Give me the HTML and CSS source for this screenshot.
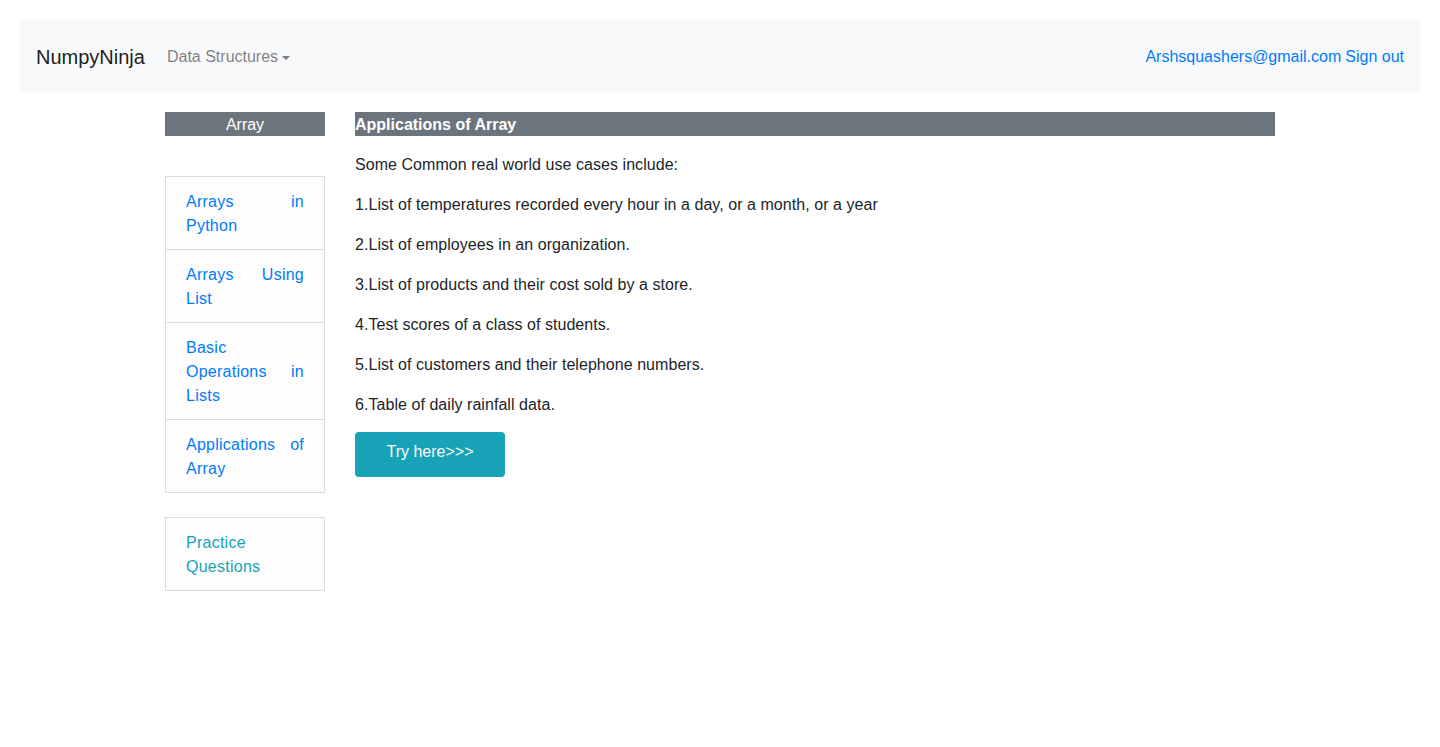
FILE: index.html
```html
<!DOCTYPE html>
<html lang="en">
<head>
<meta charset="utf-8">
<title>Applications of Array</title>
<link rel="stylesheet" href="styles.css">
</head>
<body>
<nav class="navbar">
  <div class="nav-left">
    <a class="brand" href="#">NumpyNinja</a>
    <a class="dropdown" href="#">Data Structures<span class="caret"></span></a>
  </div>
  <div class="nav-right">
    <a class="nav-link" href="#">Arshsquashers@gmail.com</a>
    <a class="nav-link" href="#">Sign out</a>
  </div>
</nav>
<div class="container">
  <aside class="sidebar">
    <div class="side-title">Array</div>
    <ul class="list-group">
      <li class="list-item"><a href="#">Arrays in Python</a></li>
      <li class="list-item"><a href="#">Arrays Using List</a></li>
      <li class="list-item"><a href="#">Basic Operations in Lists</a></li>
      <li class="list-item"><a href="#">Applications of Array</a></li>
    </ul>
    <ul class="list-group practice">
      <li class="list-item"><a class="info" href="#">Practice Questions</a></li>
    </ul>
  </aside>
  <main class="main">
    <h2 class="main-title">Applications of Array</h2>
    <p>Some Common real world use cases include:</p>
    <p>1.List of temperatures recorded every hour in a day, or a month, or a year</p>
    <p>2.List of employees in an organization.</p>
    <p>3.List of products and their cost sold by a store.</p>
    <p>4.Test scores of a class of students.</p>
    <p>5.List of customers and their telephone numbers.</p>
    <p>6.Table of daily rainfall data.</p>
    <a class="btn" href="#">Try here&gt;&gt;&gt;</a>
  </main>
</div>
</body>
</html>
```
FILE: styles.css
```css
* { box-sizing: border-box; }
html, body { margin: 0; padding: 0; }
body {
  padding: 20px;
  font-family: "Liberation Sans", Arial, sans-serif;
  font-size: 16px;
  line-height: 24px;
  color: #212529;
  background: #fff;
}
a { text-decoration: none; }
.navbar {
  display: flex;
  justify-content: space-between;
  align-items: center;
  height: 72px;
  padding: 2px 16px 0;
  background: #f8f9fa;
}
.nav-left { display: flex; align-items: center; }
.brand {
  font-size: 20px;
  line-height: 30px;
  color: rgba(0,0,0,.9);
  margin-right: 22px;
}
.dropdown { color: rgba(0,0,0,.5); display: flex; align-items: center; }
.caret {
  display: inline-block;
  margin-left: 4px;
  width: 0; height: 0;
  border-left: 4px solid transparent;
  border-right: 4px solid transparent;
  border-top: 4px solid rgba(0,0,0,.5);
  margin-top: 1px;
}
.nav-right { display: flex; gap: 4px; }
.nav-link { color: #007bff; }
.container {
  width: 1140px;
  margin: 20px auto 0;
  display: flex;
}
.sidebar { width: 190px; padding: 0 15px; }
.side-title {
  background: #6c757d;
  color: #fff;
  text-align: center;
  line-height: 24px;
  padding-top: 1px;
  height: 24px;
}
.list-group {
  list-style: none;
  margin: 40px 0 0;
  padding: 0;
  border: 1px solid #dcdcdc;
  background: #fdfdfd;
}
.list-group.practice { margin-top: 24px; }
.list-item {
  padding: 13px 20px 11px;
  text-align: justify;
  border-bottom: 1px solid #dcdcdc;
  letter-spacing: 0.25px;
}
.list-item:last-child { border-bottom: 0; }
.list-item a { color: #007bff; }
.list-item a.info { color: #17a2b8; }
.main { width: 950px; padding: 0 15px; }
.main-title {
  margin: 0 0 16px;
  background: #6c757d;
  color: #fff;
  font-size: 16px;
  font-weight: bold;
  line-height: 24px;
  padding-top: 1px;
  height: 24px;
}
.main p { margin: 0 0 16px; padding-top: 1px; height: 24px; letter-spacing: 0.05px; }
.btn {
  display: block;
  width: 150px;
  height: 45px;
  padding-top: 8px;
  text-align: center;
  background: #17a2b8;
  color: #fff;
  border-radius: 4px;
}
```
